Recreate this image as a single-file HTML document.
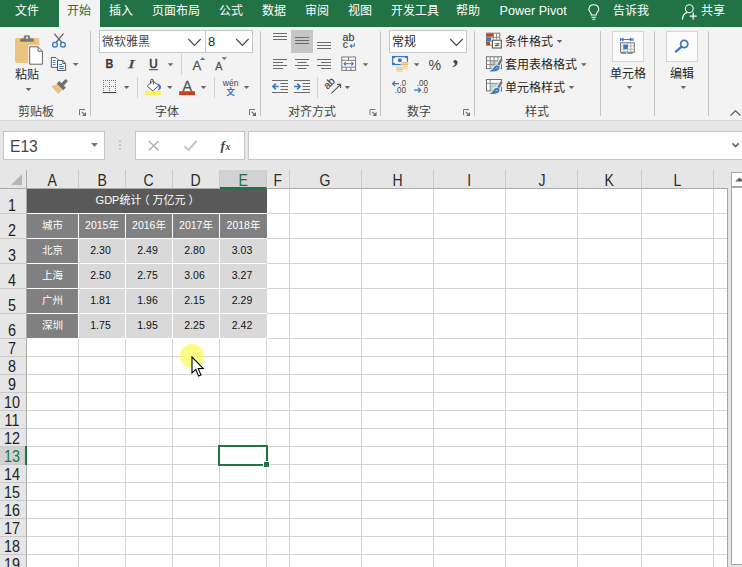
<!DOCTYPE html><html lang="zh-CN"><head><meta charset="utf-8"><title>Excel</title><style>
*{box-sizing:border-box}
html,body{margin:0;padding:0}
body{width:742px;height:567px;overflow:hidden;position:relative;background:#e6e6e6;font-family:"Liberation Sans","Noto Sans CJK SC",sans-serif;color:#262626;font-size:12px}
#tabs{position:absolute;left:0;top:0;width:742px;height:27px;background:#217346}
#tabs .t{position:absolute;top:0;height:26px;line-height:23px;color:#fff;font-size:12px;white-space:nowrap}
#tabs .act{position:absolute;left:59px;top:0;width:41px;height:27px;background:#f3f3f3}
#tabs .t.on{color:#217346}
#ribbon{position:absolute;left:0;top:26px;width:742px;height:95px;background:#f3f3f3;border-bottom:1px solid #d6d6d6}
#ribbon .gl{position:absolute;top:78.6px;font-size:12px;line-height:14px;color:#444;white-space:nowrap}
#ribbon .sep{position:absolute;top:5px;width:1px;height:85px;background:#c4c4c4}
#ribbon .tx{position:absolute;font-size:12px;line-height:14px;color:#262626;white-space:nowrap}
#ribbon .tx.g{color:#444}
#fbar{position:absolute;left:0;top:121px;width:742px;height:49px;background:#e6e6e6}
#fbar .box{position:absolute;top:10px;height:29px;background:#fff;border:1px solid #c6c6c6}
#sheet{position:absolute;left:0;top:0;width:742px;height:567px}
.gridbg{position:absolute;background:#fff}
.vl{position:absolute;top:189px;width:1px;height:378px;background:#d4d4d4}
.hl{position:absolute;left:27px;width:700px;height:1px;background:#d4d4d4}
.gridend{position:absolute;left:727px;top:188px;width:1px;height:379px;background:#a6a6a6}
.ch{position:absolute;top:170px;height:19px;line-height:21px;text-align:center;font-size:15.6px;color:#2a2a2a;border-right:1px solid #c9c9c9;border-bottom:1px solid #ababab;background:#e6e6e6}
.ch.sel{background:#d2d2d2;color:#217346;border-bottom:2px solid #217346}
.rh{position:absolute;left:0;width:27px;background:#e6e6e6;border-bottom:1px solid #c9c9c9;border-right:1px solid #ababab;font-size:15.6px;color:#222}
.rh span{position:absolute;left:0;width:24px;text-align:center;bottom:-2px;line-height:18px;transform:scaleX(.92)}
.rh.sel{background:#d2d2d2;color:#217346}
.rowmark{position:absolute;left:25px;top:446px;width:2px;height:19px;background:#217346}
.corner{position:absolute;left:0;top:170px;width:27px;height:19px;background:#e6e6e6;border-right:1px solid #ababab;border-bottom:1px solid #ababab}
.c{position:absolute;text-align:center;font-size:10.5px;line-height:23px;white-space:nowrap}
.c.dk{background:#595959;color:#fff}
.c.md{background:#808080;color:#fff}
.c.lt{background:#d9d9d9;color:#111;padding-right:3px}
.ch.last{border-right:none;width:14px}
.selbox{position:absolute;left:218px;top:445px;width:50px;height:21px;border:2px solid #217346}
.fillh{position:absolute;left:263px;top:461px;width:7px;height:7px;background:#217346;border:1px solid #fff}
.halo{position:absolute;left:180px;top:344px;width:24px;height:24px;border-radius:50%;background:#fbfb7c;opacity:.92}
.cur{position:absolute;left:191px;top:356px}
.vsb{position:absolute;left:731px;top:172px;width:11px;height:393px;background:#fff;border-left:1px solid #a6a6a6;border-top:1px solid #a6a6a6;border-bottom:1px solid #a6a6a6}
.vsbup{position:absolute;left:0;top:0;width:11px;height:15px;border-bottom:2px solid #a6a6a6;background:#fff}
#ico{position:absolute;left:0;top:0}
#ribbon .ssep{position:absolute;width:1px;height:21px;background:#d0d0d0}
#ribbon .combo{position:absolute;top:4px;height:23px;background:#fff;border:1px solid #c6c6c6}
#ribbon .hl2{position:absolute;background:#c6c6c6}
#ribbon .bigbtn{position:absolute;top:5px;width:32px;height:31px;background:#fbfbfb;border:1px solid #d4d4d4}
.ch b{display:inline-block;font-weight:normal;transform:scaleX(.9)}
.pl{position:relative;left:-3px}.pr{position:relative;left:3px}

</style></head><body>
<div id="tabs">
<div class="act"></div>
<div class="t" style="left:15px">文件</div>
<div class="t on" style="left:67px">开始</div>
<div class="t" style="left:109px">插入</div>
<div class="t" style="left:152px">页面布局</div>
<div class="t" style="left:219px">公式</div>
<div class="t" style="left:262px">数据</div>
<div class="t" style="left:305px">审阅</div>
<div class="t" style="left:348px">视图</div>
<div class="t" style="left:391px">开发工具</div>
<div class="t" style="left:456px">帮助</div>
<div class="t" style="left:499.5px;font-size:12.6px">Power Pivot</div>
<div class="t" style="left:613px">告诉我</div>
<div class="t" style="left:701px">共享</div>
</div>
<div id="ribbon">
<div style="position:absolute;left:0;top:0;width:59px;height:1px;background:#217346"></div><div style="position:absolute;left:100px;top:0;width:642px;height:1px;background:#217346"></div>
<div class="sep" style="left:90px"></div>
<div class="sep" style="left:260px"></div>
<div class="sep" style="left:380px"></div>
<div class="sep" style="left:474px"></div>
<div class="sep" style="left:600px"></div>
<div class="sep" style="left:654px"></div>
<div class="sep" style="left:708px"></div>
<div class="ssep" style="left:181px;top:28px"></div>
<div class="ssep" style="left:137px;top:51px"></div>
<div class="ssep" style="left:214px;top:51px"></div>
<div class="ssep" style="left:317px;top:51px"></div>
<div class="combo" style="left:99px;width:107px"></div>
<div class="combo" style="left:205px;width:48px"></div>
<div class="combo" style="left:389px;width:78px"></div>
<div class="hl2" style="left:291px;top:4px;width:22px;height:23px"></div>
<div class="bigbtn" style="left:612px"></div>
<div class="bigbtn" style="left:666px"></div>
<div class="tx" style="left:15px;top:42.4px">粘贴</div>
<div class="tx g" style="left:102px;top:9px">微软雅黑</div>
<div class="tx" style="left:208px;top:9px;font-size:13px">8</div>
<div class="tx" style="left:392px;top:9px">常规</div>
<div class="tx" style="left:505px;top:9px">条件格式</div>
<div class="tx" style="left:505px;top:32px">套用表格格式</div>
<div class="tx" style="left:505px;top:55px">单元格样式</div>
<div class="tx" style="left:610px;top:41px">单元格</div>
<div class="tx" style="left:670px;top:41px">编辑</div>
<div class="gl" style="left:18px">剪贴板</div>
<div class="gl" style="left:155px">字体</div>
<div class="gl" style="left:288px">对齐方式</div>
<div class="gl" style="left:407px">数字</div>
<div class="gl" style="left:525px">样式</div>
</div>
<div id="fbar">
<div class="box" style="left:3px;width:102px"><span style="position:absolute;left:6px;top:4.5px;font-size:15.6px;line-height:20px;color:#444">E13</span></div>
<div class="box" style="left:135px;width:110px"></div>
<div class="box" style="left:248px;width:500px"></div>
</div>
<svg id="ico" width="742" height="170" viewBox="0 0 742 170">
<defs>
<polygon id="dd" points="-2.8,0 2.8,0 0,3" fill="#666"/>
<g id="dl"><path d="M0.5 6 V0.5 H6" fill="none" stroke="#777" stroke-width="1"/><path d="M2.8 2.8 L5.2 5.2" fill="none" stroke="#6a6a6a" stroke-width="1.2"/><polygon points="7,3 7,7 3,7" fill="#6a6a6a"/></g>
</defs>
<!-- dropdown arrows -->
<use href="#dd" x="28.5" y="88"/><use href="#dd" x="75.7" y="63"/><use href="#dd" x="170.5" y="63.3"/>
<use href="#dd" x="126.6" y="86"/><use href="#dd" x="169.8" y="86"/><use href="#dd" x="203.5" y="86"/><use href="#dd" x="246.5" y="86"/>
<use href="#dd" x="365.5" y="63.3"/><use href="#dd" x="347.4" y="86"/><use href="#dd" x="416.7" y="63.3"/>
<use href="#dd" x="559.5" y="40"/><use href="#dd" x="583.8" y="63.3"/><use href="#dd" x="571.5" y="86"/>
<use href="#dd" x="629.5" y="86"/><use href="#dd" x="683.4" y="86"/>
<polygon points="91,143 98,143 94.5,147" fill="#777"/>
<!-- dialog launchers -->
<use href="#dl" x="79" y="109"/><use href="#dl" x="249" y="109"/><use href="#dl" x="369.5" y="109"/><use href="#dl" x="463" y="109"/>
<!-- combo chevrons -->
<g fill="none" stroke="#444" stroke-width="1.1"><path d="M188.3 39 L194.5 45.5 L200.7 39"/><path d="M236.2 39 L242.4 45.5 L248.6 39"/><path d="M450.2 39 L456.5 45.5 L462.8 39"/></g>
<!-- collapse chevron -->
<path d="M730.5 115.5 L735.5 110.8 L740.5 115.5" fill="none" stroke="#555" stroke-width="1.1"/>
<!-- formula bar expand chevron -->
<path d="M732.6 143.4 L735.6 146.6 L738.6 143.4" fill="none" stroke="#666" stroke-width="1.7"/>

<!-- PASTE -->
<rect x="15" y="37.9" width="24.3" height="25" rx="1.8" fill="#ebc47f"/>
<path d="M23.7 38.6 V37 Q23.7 35.2 25.5 35.2 H28.3 Q30.1 35.2 30.1 37 V38.6 H33 Q33.8 38.6 33.8 39.4 V41.7 H20.2 V39.4 Q20.2 38.6 21 38.6 Z" fill="#787878"/>
<rect x="25.9" y="36.6" width="2.1" height="2.2" rx=".6" fill="#f3e3c6"/>
<path d="M28.2 45.3 H38.8 L43.9 50.4 V65.6 H28.2 Z" fill="#f3f3f3"/>
<path d="M29.7 46.8 H38 L42.4 51.2 V64.2 H29.7 Z" fill="#fff" stroke="#666" stroke-width="1"/>
<path d="M38 46.8 V51.2 H42.4" fill="none" stroke="#666" stroke-width="1"/>

<!-- CUT -->
<g fill="none">
<path d="M54.3 33.6 L62.2 43" stroke="#666" stroke-width="1.35"/>
<path d="M63.5 33.6 L55.6 43" stroke="#666" stroke-width="1.35"/>
<circle cx="55" cy="44.8" r="2.4" stroke="#3b78c0" stroke-width="1.3"/>
<circle cx="62.9" cy="44.8" r="2.4" stroke="#3b78c0" stroke-width="1.3"/>
</g>
<!-- COPY -->
<g>
<path d="M51.3 57.5 H56 L58.4 59.9 V67.3 H51.3 Z" fill="#fff" stroke="#555" stroke-width="1"/>
<path d="M52.8 60.5 H55.5 M52.8 62.5 H55.5 M52.8 64.5 H55.5" stroke="#3b78c0" stroke-width="1"/>
<path d="M57.5 60.5 H62.7 L65.6 63.4 V70.5 H57.5 Z" fill="#fff" stroke="#555" stroke-width="1"/>
<path d="M62.7 60.5 V63.4 H65.6" fill="none" stroke="#555" stroke-width="1"/>
<path d="M59.3 64.5 H62 M59.3 66.5 H63.8 M59.3 68.5 H63.8" stroke="#3b78c0" stroke-width="1"/>
</g>
<!-- FORMAT PAINTER -->
<g transform="translate(61.2,85.7) rotate(45)">
<rect x="-1.6" y="-8" width="3.2" height="6.4" rx=".8" fill="#6e6e6e"/>
<rect x="-4.6" y="-1.9" width="9.2" height="3.7" fill="#6e6e6e"/>
<path d="M-3.8 2.1 H3.8 L3.5 8 L-6.4 7.4 Z" fill="#eac282"/>
</g>

<!-- B I U -->
<text x="105.4" y="68" font-family="Liberation Sans, sans-serif" font-weight="bold" font-size="12.6" fill="#3c3c3c" stroke="#3c3c3c" stroke-width=".25" textLength="7.8" lengthAdjust="spacingAndGlyphs">B</text>
<text x="128" y="68" font-family="Liberation Serif, serif" font-style="italic" font-size="13.4" fill="#444" stroke="#444" stroke-width=".25" textLength="6.6" lengthAdjust="spacingAndGlyphs">I</text>
<text x="149.2" y="68" font-family="Liberation Sans, sans-serif" font-size="12.6" fill="#3c3c3c" stroke="#3c3c3c" stroke-width=".65" textLength="8.4" lengthAdjust="spacingAndGlyphs">U</text>
<rect x="149" y="69.2" width="9" height="1" fill="#444"/>
<!-- grow / shrink font -->
<text x="192.6" y="70" font-family="Liberation Sans, sans-serif" font-size="13" fill="#555" stroke="#555" stroke-width=".3">A</text>
<polygon points="200,59.9 205.2,59.9 202.6,57.2" fill="#3b78c0"/>
<text x="215.2" y="70" font-family="Liberation Sans, sans-serif" font-size="10.7" fill="#555" stroke="#555" stroke-width=".3">A</text>
<polygon points="221.6,57.3 227,57.3 224.3,60" fill="#3b78c0"/>
<!-- borders -->
<g stroke="#777" stroke-width="1" stroke-dasharray="1 1" fill="none">
<path d="M103 80.5 H116 M103 86.5 H116"/>
<path d="M103.5 80 V92 M109.5 80 V92 M115.5 80 V92"/>
</g>
<rect x="102.7" y="92" width="13.6" height="1.1" fill="#444"/>
<!-- fill color -->
<rect x="145" y="90.9" width="16" height="4.1" fill="#fff25f"/>
<polygon points="147.2,86.2 152.9,80.8 158.7,85.7 152.8,90.8" fill="#fff" stroke="#555" stroke-width="1"/>
<path d="M150.7 84 V80.3 Q150.7 79.3 152 79.3 Q153.3 79.3 153.3 80.3 V84.5" fill="none" stroke="#555" stroke-width="1"/>
<path d="M157.6 83.2 Q161.6 85.3 161 88 Q160.4 89.8 158 90.4 Q159.8 87 157.6 83.2 Z" fill="#3b78c0"/>
<!-- font color -->
<text x="182.4" y="91.1" font-family="Liberation Sans, sans-serif" font-size="14.2" fill="#555" stroke="#555" stroke-width=".3">A</text>
<rect x="179.2" y="91.2" width="15.8" height="3.9" fill="#c8401a"/>
<!-- phonetic -->
<text x="222.8" y="86.1" font-family="Liberation Sans, sans-serif" font-size="8.6" fill="#444" textLength="15.7" lengthAdjust="spacingAndGlyphs">wén</text>
<text x="226.2" y="94.6" font-family="Noto Sans CJK SC, sans-serif" font-size="8.6" font-weight="bold" fill="#3b78c0">文</text>

<!-- alignment -->
<g stroke="#6a6a6a" stroke-width="1" fill="none">
<path d="M273 33.5 H287 M273 36.5 H287 M273 39.5 H287"/>
<path d="M295 37.5 H309 M295 40.5 H309 M295 43.5 H309"/>
<path d="M317 42.5 H331 M317 45.5 H331 M317 48.5 H331"/>
<path d="M273 59.5 H287 M273 62.5 H283 M273 65.5 H287 M273 68.5 H283"/>
<path d="M295 59.5 H309 M297.5 62.5 H306.5 M295 65.5 H309 M297.5 68.5 H306.5"/>
<path d="M317 59.5 H331 M321 62.5 H331 M317 65.5 H331 M321 68.5 H331"/>
<path d="M272 80.5 H288 M280.5 83.5 H288 M280.5 86.5 H288 M280.5 89.5 H288 M272 92.5 H288"/>
<path d="M294 80.5 H310 M302.5 83.5 H310 M302.5 86.5 H310 M302.5 89.5 H310 M294 92.5 H310"/>
</g>
<g stroke="#3b78c0" stroke-width="1.5" fill="none">
<path d="M278.6 86.5 H273 M275.8 83.6 L272.9 86.5 L275.8 89.4"/>
<path d="M294 86.5 H300 M297.2 83.6 L300.1 86.5 L297.2 89.4"/>
</g>
<!-- wrap text -->
<text x="342.6" y="41.2" font-family="Liberation Sans, sans-serif" font-size="10.6" fill="#444" stroke="#444" stroke-width=".2">ab</text>
<text x="342.8" y="47.8" font-family="Liberation Sans, sans-serif" font-size="10" fill="#444" stroke="#444" stroke-width=".2">c</text>
<path d="M354.3 43.3 V46 H350.3 M352 44.3 L350.2 46 L352 47.7" fill="none" stroke="#3b78c0" stroke-width="1.1"/>
<!-- merge & center -->
<g fill="none" stroke="#777" stroke-width="1">
<rect x="341.8" y="57" width="13.6" height="13.4" fill="#fff"/>
<path d="M341.8 60.3 H355.4 M341.8 67.2 H355.4 M348.5 57 V60.3 M346.3 67.2 V70.4 M351 67.2 V70.4"/>
</g>
<path d="M344 63.7 H353.2 M345.8 61.9 L344 63.7 L345.8 65.5 M351.4 61.9 L353.2 63.7 L351.4 65.5" fill="none" stroke="#3b78c0" stroke-width="1.1"/>
<!-- orientation -->
<g transform="translate(331.2,85.2) rotate(-45)">
<text x="-5.8" y="0.6" font-family="Liberation Sans, sans-serif" font-size="10.4" fill="#444" stroke="#444" stroke-width=".2">ab</text>
</g>
<path d="M331.4 93.4 L340.4 84.6 M337 84.4 H340.6 V88" fill="none" stroke="#555" stroke-width="1.1"/>

<!-- currency -->
<rect x="392.6" y="56.6" width="14.8" height="7.9" fill="#fff" stroke="#3b78c0" stroke-width="1.3"/>
<path d="M393 57 h2 v1.2 h-2 Z M405 57 h2 v1.2 h-2 Z M393 62.8 h2 v1.2 h-2 Z" fill="#3b78c0"/>
<circle cx="399.8" cy="60.2" r="2" fill="#3b78c0"/>
<g fill="#edb96a" stroke="#f7ecd5" stroke-width=".5">
<rect x="401" y="61.8" width="7" height="1.9" rx=".9"/><rect x="401" y="63.6" width="7" height="1.9" rx=".9"/>
<rect x="403" y="65.6" width="5" height="1.5" rx=".7" fill="#f2cd94"/><rect x="403" y="67.2" width="5" height="1.5" rx=".7" fill="#f2cd94"/>
<rect x="396" y="67" width="7" height="1.8" rx=".9"/><rect x="396" y="68.7" width="7" height="1.8" rx=".9"/><rect x="396.6" y="70.4" width="6" height="1.5" rx=".7" fill="#f2cd94"/>
</g>
<text x="428.4" y="70" font-family="Liberation Sans, sans-serif" font-size="14.5" fill="#444" textLength="12.6" lengthAdjust="spacingAndGlyphs">%</text>
<text x="452.6" y="63.4" font-family="Liberation Serif, serif" font-weight="bold" font-size="23" fill="#444">,</text>
<!-- decimals -->
<g font-family="Liberation Sans, sans-serif" font-size="8.2" fill="#444">
<text x="399.6" y="85.8" textLength="6.4" lengthAdjust="spacingAndGlyphs">.0</text>
<text x="394.7" y="92.7" textLength="11.2" lengthAdjust="spacingAndGlyphs">.00</text>
<text x="416.8" y="85.8" textLength="11.2" lengthAdjust="spacingAndGlyphs">.00</text>
<text x="421.7" y="92.7" textLength="6.4" lengthAdjust="spacingAndGlyphs">.0</text>
</g>
<g fill="none" stroke="#3b78c0" stroke-width="1.3">
<path d="M399 83.7 H392.6 M395 81.3 L392.6 83.7 L395 86.1"/>
<path d="M414 90.2 H420.6 M418.2 87.8 L420.6 90.2 L418.2 92.6"/>
</g>

<!-- conditional formatting -->
<g>
<rect x="486.5" y="33.2" width="13.2" height="12" fill="#fff" stroke="#777" stroke-width="1"/>
<path d="M486.5 37.2 H499.7 M486.5 41.3 H499.7 M493.4 33.2 V45.2 M496.6 33.2 V45.2" stroke="#8a8a8a" stroke-width="1" fill="none"/>
<rect x="486.9" y="33.5" width="6.2" height="3.2" fill="#c8401a"/>
<rect x="486.9" y="37.6" width="4.4" height="3.4" fill="#3b78c0"/>
<rect x="486.9" y="41.8" width="3.2" height="3.2" fill="#c8401a"/>
<rect x="491.4" y="39.2" width="10.8" height="9.8" fill="#f3f3f3"/>
<rect x="492.4" y="40.2" width="8.9" height="7.8" fill="#fff" stroke="#444" stroke-width="1"/>
<text x="494" y="46.9" font-family="DejaVu Sans, sans-serif" font-size="7.5" fill="#444">≠</text>
</g>
<!-- format as table -->
<g>
<rect x="486.5" y="56.8" width="15" height="11.8" fill="#fff" stroke="#6e6e6e" stroke-width="1"/>
<rect x="490.4" y="61" width="7.6" height="7.6" fill="#b9d6df"/>
<path d="M486.5 60.7 H501.5 M486.5 64.6 H501.5 M490.2 56.8 V68.6 M494.1 56.8 V68.6 M498 56.8 V68.6" stroke="#8a8a8a" stroke-width="1" fill="none"/>
</g>
<g transform="translate(0,0)">
<path d="M501.7 59.2 L498.2 65.2" stroke="#f3f3f3" stroke-width="4.6" fill="none"/>
<path d="M499.2 66 Q500.6 69 497.6 70.4 Q494 71.9 489.4 71.3 Q492.6 70 493.4 68 Q494.3 65.2 497 65.2 Z" fill="#f3f3f3" stroke="#f3f3f3" stroke-width="2"/>
<path d="M501.7 59.2 L498.3 65" stroke="#787878" stroke-width="2.5" fill="none"/>
<path d="M499.2 66 Q500.6 69 497.6 70.4 Q494 71.9 489.4 71.3 Q492.6 70 493.4 68 Q494.3 65.2 497 65.2 Z" fill="#3b78c0"/>
<path d="M495.4 68.6 Q496.4 67.2 497.8 67.8" stroke="#dbe8f5" stroke-width=".8" fill="none"/>
</g>
<!-- cell styles -->
<g>
<rect x="486.5" y="79.5" width="15" height="11.4" fill="#fff" stroke="#6e6e6e" stroke-width="1"/>
<rect x="490.4" y="83.6" width="8.2" height="6.6" fill="#b9d6df"/>
<path d="M486.5 83.3 H501.5 M490.2 79.5 V90.9" stroke="#8a8a8a" stroke-width="1" fill="none"/>
</g>
<g transform="translate(0,22.6)">
<path d="M501.7 59.2 L498.2 65.2" stroke="#f3f3f3" stroke-width="4.6" fill="none"/>
<path d="M499.2 66 Q500.6 69 497.6 70.4 Q494 71.9 489.4 71.3 Q492.6 70 493.4 68 Q494.3 65.2 497 65.2 Z" fill="#f3f3f3" stroke="#f3f3f3" stroke-width="2"/>
<path d="M501.7 59.2 L498.3 65" stroke="#787878" stroke-width="2.5" fill="none"/>
<path d="M499.2 66 Q500.6 69 497.6 70.4 Q494 71.9 489.4 71.3 Q492.6 70 493.4 68 Q494.3 65.2 497 65.2 Z" fill="#3b78c0"/>
<path d="M495.4 68.6 Q496.4 67.2 497.8 67.8" stroke="#dbe8f5" stroke-width=".8" fill="none"/>
</g>
<!-- cells big icon -->
<g>
<path d="M620.5 37.9 V41 M633 37.9 V41 M621.6 39.5 H631.9 M623.4 38 L621.8 39.5 L623.4 41 M630.1 38 L631.7 39.5 L630.1 41" fill="none" stroke="#3b78c0" stroke-width="1.1"/>
<rect x="620.5" y="42.8" width="13.8" height="9.4" fill="#fff" stroke="#6e6e6e" stroke-width="1"/>
<path d="M620.5 46 H634.3 M620.5 49.2 H634.3 M623.9 42.8 V52.2 M627.4 42.8 V52.2 M630.9 42.8 V52.2" stroke="#a8a8a8" stroke-width=".8" fill="none"/>
<rect x="623.4" y="44.6" width="4.4" height="4.4" fill="#3b78c0"/>
<path d="M621 53.3 H626 M627.5 53.3 H632.5" stroke="#6e6e6e" stroke-width="1" fill="none"/>
</g>
<!-- editing: magnifier -->
<g fill="none" stroke="#3b78c0">
<circle cx="684.2" cy="44" r="3.6" stroke-width="1.7"/>
<path d="M681.4 46.8 L675.8 51.6" stroke-width="2.2" stroke-linecap="round"/>
</g>

<!-- formula bar -->
<g fill="#b0b0b0"><circle cx="120" cy="141.3" r=".9"/><circle cx="120" cy="145.2" r=".9"/><circle cx="120" cy="149.1" r=".9"/></g>
<path d="M148.8 141 L158.6 150.4 M158.6 141 L148.8 150.4" stroke="#b4b4b4" stroke-width="1.5" fill="none"/>
<path d="M184.4 146.2 L188.6 150 L196.6 141" stroke="#c6c6c6" stroke-width="2.1" fill="none"/>
<text x="220.4" y="149.5" font-family="Liberation Serif, serif" font-style="italic" font-weight="bold" font-size="13.5" fill="#444">f</text>
<text x="225.6" y="150" font-family="Liberation Serif, serif" font-style="italic" font-weight="bold" font-size="9.5" fill="#444">x</text>

<!-- tell me bulb -->
<g fill="none" stroke="#fff" stroke-width="1.1">
<path d="M591.3 15 Q591.3 13.3 590 11.9 Q588.8 10.5 588.9 9 Q589.2 4.7 593.8 4.7 Q598.4 4.7 598.7 9 Q598.8 10.5 597.6 11.9 Q596.3 13.3 596.3 15 Z"/>
<path d="M591.5 17.2 H596.1 M592.3 19.3 H595.3"/>
</g>
<!-- share person -->
<g fill="none" stroke="#fff" stroke-width="1.1">
<circle cx="689.3" cy="8.7" r="3.9"/>
<path d="M682.4 19.6 Q682.8 13.6 687.4 12.4"/>
<path d="M693.2 12.6 V19.6 M689.7 16.1 H696.7" stroke-width="1.2"/>
</g>
</svg>

<div id="sheet">
<div class="gridbg" style="left:27px;top:189px;width:700px;height:378px"></div>
<div class="vl" style="left:78px"></div>
<div class="vl" style="left:125px"></div>
<div class="vl" style="left:172px"></div>
<div class="vl" style="left:219px"></div>
<div class="vl" style="left:266px"></div>
<div class="vl" style="left:289px"></div>
<div class="vl" style="left:361px"></div>
<div class="vl" style="left:433px"></div>
<div class="vl" style="left:505px"></div>
<div class="vl" style="left:577px"></div>
<div class="vl" style="left:641px"></div>
<div class="vl" style="left:713px"></div>
<div class="hl" style="top:213px"></div>
<div class="hl" style="top:238px"></div>
<div class="hl" style="top:263px"></div>
<div class="hl" style="top:288px"></div>
<div class="hl" style="top:313px"></div>
<div class="hl" style="top:338px"></div>
<div class="hl" style="top:356px"></div>
<div class="hl" style="top:374px"></div>
<div class="hl" style="top:392px"></div>
<div class="hl" style="top:410px"></div>
<div class="hl" style="top:428px"></div>
<div class="hl" style="top:446px"></div>
<div class="hl" style="top:464px"></div>
<div class="hl" style="top:482px"></div>
<div class="hl" style="top:500px"></div>
<div class="hl" style="top:518px"></div>
<div class="hl" style="top:536px"></div>
<div class="hl" style="top:554px"></div>
<div class="hl" style="top:572px"></div>
<div class="gridend"></div>
<div class="ch" style="left:27px;width:52px"><b>A</b></div>
<div class="ch" style="left:79px;width:47px"><b>B</b></div>
<div class="ch" style="left:126px;width:47px"><b>C</b></div>
<div class="ch" style="left:173px;width:47px"><b>D</b></div>
<div class="ch sel" style="left:220px;width:47px"><b>E</b></div>
<div class="ch" style="left:267px;width:23px"><b>F</b></div>
<div class="ch" style="left:290px;width:72px"><b>G</b></div>
<div class="ch" style="left:362px;width:72px"><b>H</b></div>
<div class="ch" style="left:434px;width:72px"><b>I</b></div>
<div class="ch" style="left:506px;width:72px"><b>J</b></div>
<div class="ch" style="left:578px;width:64px"><b>K</b></div>
<div class="ch" style="left:642px;width:72px"><b>L</b></div>
<div class="ch last" style="left:714px;width:14px"></div>
<div class="rh" style="top:189px;height:25px"><span>1</span></div>
<div class="rh" style="top:214px;height:25px"><span>2</span></div>
<div class="rh" style="top:239px;height:25px"><span>3</span></div>
<div class="rh" style="top:264px;height:25px"><span>4</span></div>
<div class="rh" style="top:289px;height:25px"><span>5</span></div>
<div class="rh" style="top:314px;height:25px"><span>6</span></div>
<div class="rh" style="top:339px;height:18px"><span>7</span></div>
<div class="rh" style="top:357px;height:18px"><span>8</span></div>
<div class="rh" style="top:375px;height:18px"><span>9</span></div>
<div class="rh" style="top:393px;height:18px"><span>10</span></div>
<div class="rh" style="top:411px;height:18px"><span>11</span></div>
<div class="rh" style="top:429px;height:18px"><span>12</span></div>
<div class="rh sel" style="top:447px;height:18px"><span>13</span></div>
<div class="rh" style="top:465px;height:18px"><span>14</span></div>
<div class="rh" style="top:483px;height:18px"><span>15</span></div>
<div class="rh" style="top:501px;height:18px"><span>16</span></div>
<div class="rh" style="top:519px;height:18px"><span>17</span></div>
<div class="rh" style="top:537px;height:18px"><span>18</span></div>
<div class="rh" style="top:555px;height:18px"><span>19</span></div>
<div class="rowmark"></div>
<div class="corner"><svg width="27" height="18" viewBox="0 0 27 18"><polygon points="22,4 22,15 11,15" fill="#b7b7b7"/></svg></div>
<div class="gridbg" style="left:27px;top:189px;width:240px;height:150px"></div>
<div class="c dk" style="left:27px;top:189px;width:240px;height:24px;font-size:11px;padding-right:2px">GDP统计<span class="pl">（</span>万亿元<span class="pr">）</span></div>
<div class="c md" style="left:27px;top:214px;width:51px;height:24px">城市</div>
<div class="c md" style="left:79px;top:214px;width:46px;height:24px">2015年</div>
<div class="c md" style="left:126px;top:214px;width:46px;height:24px">2016年</div>
<div class="c md" style="left:173px;top:214px;width:46px;height:24px">2017年</div>
<div class="c md" style="left:220px;top:214px;width:47px;height:24px">2018年</div>
<div class="c md" style="left:27px;top:239px;width:51px;height:24px">北京</div>
<div class="c lt" style="left:79px;top:239px;width:46px;height:24px">2.30</div>
<div class="c lt" style="left:126px;top:239px;width:46px;height:24px">2.49</div>
<div class="c lt" style="left:173px;top:239px;width:46px;height:24px">2.80</div>
<div class="c lt" style="left:220px;top:239px;width:47px;height:24px">3.03</div>
<div class="c md" style="left:27px;top:264px;width:51px;height:24px">上海</div>
<div class="c lt" style="left:79px;top:264px;width:46px;height:24px">2.50</div>
<div class="c lt" style="left:126px;top:264px;width:46px;height:24px">2.75</div>
<div class="c lt" style="left:173px;top:264px;width:46px;height:24px">3.06</div>
<div class="c lt" style="left:220px;top:264px;width:47px;height:24px">3.27</div>
<div class="c md" style="left:27px;top:289px;width:51px;height:24px">广州</div>
<div class="c lt" style="left:79px;top:289px;width:46px;height:24px">1.81</div>
<div class="c lt" style="left:126px;top:289px;width:46px;height:24px">1.96</div>
<div class="c lt" style="left:173px;top:289px;width:46px;height:24px">2.15</div>
<div class="c lt" style="left:220px;top:289px;width:47px;height:24px">2.29</div>
<div class="c md" style="left:27px;top:314px;width:51px;height:24px">深圳</div>
<div class="c lt" style="left:79px;top:314px;width:46px;height:24px">1.75</div>
<div class="c lt" style="left:126px;top:314px;width:46px;height:24px">1.95</div>
<div class="c lt" style="left:173px;top:314px;width:46px;height:24px">2.25</div>
<div class="c lt" style="left:220px;top:314px;width:47px;height:24px">2.42</div>
<div class="selbox"></div><div class="fillh"></div>
<div class="halo"></div>
<svg class="cur" width="14" height="22" viewBox="0 0 14 22"><path d="M1 1 L1 17 L4.8 13.4 L7.6 20 L10 19 L7.2 12.6 L12.2 12.4 Z" fill="#fff" stroke="#000" stroke-width="1.1" stroke-linejoin="miter"/></svg>
<div class="vsb"><div class="vsbup"><svg width="11" height="13" viewBox="0 0 11 13"><polygon points="3.2,8.6 11.8,8.6 7.5,4.4" fill="#606060"/></svg></div></div>
</div>
</body></html>
